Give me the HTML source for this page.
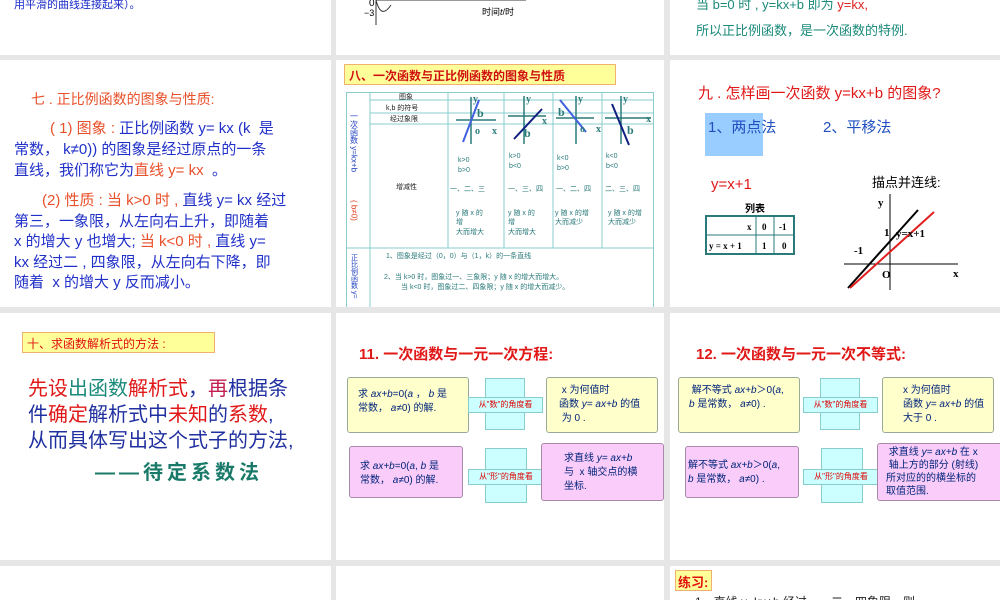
<!DOCTYPE html>
<html><head><meta charset="utf-8"><style>
*{margin:0;padding:0;box-sizing:border-box}
body{width:1000px;height:600px;background:#e6e6e6;position:relative;overflow:hidden;font-family:"Liberation Sans","Noto Sans CJK SC",sans-serif}
.s{position:absolute;background:#fff;overflow:hidden}
.a{position:absolute;white-space:nowrap}
.hb{position:absolute;background:#ffff99;border:1px solid #f0b070}
.yb{position:absolute;background:#ffffcc;border:1px solid #9a9;border-radius:3px;font-size:10px;color:#00237a;line-height:14px;padding:6px 10px;white-space:nowrap}
.pb{position:absolute;background:#f9ccfa;border:1px solid #a8a;border-radius:3px;font-size:10px;color:#00237a;line-height:14px;padding:6px 10px;white-space:nowrap}
.cy{position:absolute;background:#ccffff;border:1px solid #8cc}
.arr{position:absolute;font-size:8px;color:#d00;text-align:center;line-height:14px}
</style></head><body>
<!-- row1 -->
<div class="s" style="left:0;top:0;width:331px;height:55px">
<div class="a" style="left:14px;top:-4px;font-size:11px;color:#1a2ac8">用平滑的曲线连接起来）。</div></div>
<div class="s" style="left:336px;top:0;width:328px;height:55px">
<svg class="a" style="left:0;top:0" width="328" height="55"><line x1="40" y1="0" x2="40" y2="25" stroke="#333"/><path d="M40 0 Q45 20 55 5" stroke="#333" fill="none"/><line x1="40" y1="0" x2="190" y2="0" stroke="#333"/></svg>
<div class="a" style="left:33px;top:-2px;font-size:10px">0</div><div class="a" style="left:28px;top:8px;font-size:9px">−3</div>
<div class="a" style="left:146px;top:5px;font-size:9px">时间<i>t</i>/时</div></div>
<div class="s" style="left:670px;top:0;width:330px;height:55px">
<div class="a" style="left:26px;top:-6px;font-size:13px;color:#1a8a7a">当 b=0 时 , y=kx+b 即为 <span style="color:#e02020">y=kx,</span></div>
<div class="a" style="left:26px;top:20px;font-size:13px;color:#1a8a7a">所以正比例函数，是一次函数的特例.</div></div>
<!-- row2 -->
<div class="s" style="left:0;top:60px;width:331px;height:247px">
<div class="a" style="left:31px;top:29px;font-size:14px;color:#e8502a">七 . 正比例函数的图象与性质:</div>
<div class="a" style="left:14px;top:58px;font-size:15px;color:#2030c8;line-height:21px">
<span style="padding-left:36px"></span><span style="color:#e8502a">( 1) 图象 :</span> 正比例函数 y= kx (k &nbsp;是<br>常数， k≠0)) 的图象是经过原点的一条<br>直线，我们称它为<span style="color:#e8502a">直线 y= kx</span> &nbsp;。</div>
<div class="a" style="left:14px;top:131px;font-size:15px;color:#2030c8;line-height:20.5px">
<span style="padding-left:28px"></span><span style="color:#e8502a">(2) 性质 : 当 k&gt;0 时 ,</span> 直线 y= kx 经过<br>第三，一象限，从左向右上升，即随着<br>x 的增大 y 也增大; <span style="color:#e8502a">当 k&lt;0 时 ,</span> 直线 y=<br>kx 经过二 , 四象限，从左向右下降，即<br>随着 &nbsp;x 的增大 y 反而减小。</div></div>
<div class="s" style="left:336px;top:60px;width:328px;height:247px">
<div class="hb" style="left:8px;top:4px;width:272px;height:21px;font-size:12px;color:#d01010;font-weight:bold;padding:2px 4px">八、一次函数与正比例函数的图象与性质</div>
<svg class="a" style="left:10px;top:32px" width="310" height="215">
<g stroke="#8cc" fill="none"><rect x="0.5" y="0.5" width="307" height="216"/><line x1="24" y1="0" x2="24" y2="216"/><line x1="102" y1="0" x2="102" y2="156"/><line x1="158" y1="0" x2="158" y2="156"/><line x1="207" y1="0" x2="207" y2="156"/><line x1="256" y1="0" x2="256" y2="156"/><line x1="24" y1="8" x2="308" y2="8"/><line x1="24" y1="21" x2="308" y2="21"/><line x1="24" y1="32" x2="308" y2="32"/><line x1="0" y1="156" x2="308" y2="156"/></g>
<g stroke="#2a7a7a" stroke-width="1.5"><line x1="110" y1="28" x2="150" y2="28"/><line x1="125" y1="5" x2="125" y2="52"/><line x1="162" y1="24" x2="200" y2="24"/><line x1="178" y1="4" x2="178" y2="52"/><line x1="210" y1="26" x2="248" y2="26"/><line x1="230" y1="4" x2="230" y2="52"/><line x1="259" y1="26" x2="305" y2="26"/><line x1="275" y1="4" x2="275" y2="52"/></g>
<g stroke-width="2"><line x1="117" y1="50" x2="133" y2="8" stroke="#4060e0"/><line x1="168" y1="47" x2="196" y2="17" stroke="#102080"/><line x1="214" y1="8" x2="240" y2="40" stroke="#4060e0"/><line x1="266" y1="12" x2="283" y2="53" stroke="#102080"/></g>
<g fill="#2a7a7a" font-size="10" font-weight="bold" font-family="Liberation Serif"><text x="127" y="10">y</text><text x="131" y="25" font-size="12">b</text><text x="129" y="42">o</text><text x="146" y="42">x</text><text x="180" y="10">y</text><text x="196" y="32">x</text><text x="178" y="45" font-size="12">b</text><text x="232" y="10">y</text><text x="212" y="24" font-size="12">b</text><text x="234" y="40">o</text><text x="250" y="40">x</text><text x="277" y="10">y</text><text x="300" y="30">x</text><text x="281" y="42" font-size="12">b</text></g>
<g fill="#2a7a7a" font-size="7"><text x="112" y="70">k&gt;0</text><text x="112" y="80">b&gt;0</text><text x="163" y="66">k&gt;0</text><text x="163" y="76">b&lt;0</text><text x="211" y="68">k&lt;0</text><text x="211" y="78">b&gt;0</text><text x="260" y="66">k&lt;0</text><text x="260" y="76">b&lt;0</text>
<text x="104" y="99">一、二、三</text><text x="162" y="99">一、三、四</text><text x="210" y="99">一、二、四</text><text x="259" y="99">二、三、四</text>
<text x="110" y="123">y 随 x 的</text><text x="110" y="132">增</text><text x="110" y="142">大而增大</text><text x="162" y="123">y 随 x 的</text><text x="162" y="132">增</text><text x="162" y="142">大而增大</text><text x="209" y="123">y 随 x 的增</text><text x="209" y="132">大而减少</text><text x="262" y="123">y 随 x 的增</text><text x="262" y="132">大而减少</text>
<text x="40" y="166">1、图象是经过（0，0）与（1，k）的一条直线</text><text x="38" y="187">2、当 k&gt;0 时，图象过一、三象限；y 随 x 的增大而增大。</text><text x="55" y="197">当 k&lt;0 时，图象过二、四象限；y 随 x 的增大而减少。</text></g>
<g fill="#222" font-size="7"><text x="53" y="7">图象</text><text x="40" y="18">k,b 的符号</text><text x="44" y="29">经过象限</text><text x="50" y="97">增减性</text></g>
<text x="8" y="20" font-size="8" fill="#2040c0" writing-mode="tb">一次函数 y=kx+b</text><text x="8" y="108" font-size="8" fill="#e04020" writing-mode="tb">( b≠0)</text><text x="8" y="162" font-size="7" fill="#2040c0" writing-mode="tb">正比例函数 y=</text>
</svg></div>
<div class="s" style="left:670px;top:60px;width:330px;height:247px">
<div class="a" style="left:28px;top:22px;font-size:15px;color:#e01818">九 . 怎样画一次函数 y=kx+b 的图象?</div>
<div class="a" style="left:35px;top:53px;width:58px;height:43px;background:#99ccff"></div>
<div class="a" style="left:38px;top:56px;font-size:15px;color:#2050c0">1、两点法</div>
<div class="a" style="left:153px;top:56px;font-size:15px;color:#2050c0">2、平移法</div>
<div class="a" style="left:41px;top:116px;font-size:15px;color:#e01818">y=x+1</div>
<div class="a" style="left:202px;top:112px;font-size:13px">描点并连线:</div>
<div class="a" style="left:75px;top:140px;font-size:10px;font-weight:bold">列表</div>
<svg class="a" style="left:35px;top:155px" width="92" height="42"><rect x="1" y="1" width="88" height="38" fill="none" stroke="#2a7a7a" stroke-width="2"/><line x1="2" y1="20" x2="89" y2="20" stroke="#2a7a7a"/><line x1="51" y1="1" x2="51" y2="39" stroke="#2a7a7a"/><line x1="69" y1="1" x2="69" y2="39" stroke="#2a7a7a"/><g font-size="9" font-family="Liberation Serif" font-weight="bold"><text x="42" y="15">x</text><text x="57" y="15">0</text><text x="74" y="15">-1</text><text x="4" y="34">y = x + 1</text><text x="57" y="34">1</text><text x="77" y="34">0</text></g></svg>
<svg class="a" style="left:170px;top:130px" width="130" height="100"><line x1="4" y1="74" x2="118" y2="74" stroke="#000"/><line x1="50" y1="4" x2="50" y2="100" stroke="#000"/><line x1="8" y1="98" x2="78" y2="20" stroke="#000" stroke-width="2"/><line x1="10" y1="98" x2="94" y2="22" stroke="#e02020" stroke-width="2"/><g font-size="11" font-weight="bold" font-family="Liberation Serif"><text x="38" y="16">y</text><text x="113" y="87">x</text><text x="44" y="46">1</text><text x="56" y="47">y=x+1</text><text x="14" y="64">-1</text><text x="42" y="88">O</text></g></svg></div>
<!-- row3 -->
<div class="s" style="left:0;top:313px;width:331px;height:247px">
<div class="hb" style="left:22px;top:19px;width:193px;height:21px;font-size:12px;color:#e01010;padding:2px 4px">十、求函数解析式的方法 :</div>
<div class="a" style="left:28px;top:63px;font-size:20px;line-height:26px;color:#2030a0"><span style="color:#e01818">先设</span><span style="color:#1a8a7a">出函数</span><span style="color:#e01818">解析式</span>，<span style="color:#c02050">再</span><span style="color:#2030a0">根据条</span></div>
<div class="a" style="left:28px;top:89px;font-size:20px;line-height:26px;color:#2030a0">件<span style="color:#e01818">确定</span>解析式中<span style="color:#e01818">未知</span>的<span style="color:#e01818">系数</span>,</div>
<div class="a" style="left:28px;top:115px;font-size:20px;line-height:26px;color:#2030a0">从而具体写出这个式子的方法,</div>
<div class="a" style="left:95px;top:143px;font-size:20px;color:#1a7a6a;font-weight:bold;letter-spacing:4px">——待定系数法</div></div>
<div class="s" style="left:336px;top:313px;width:328px;height:247px">
<div class="a" style="left:23px;top:30px;font-size:15px;color:#e01818;font-weight:bold">11. 一次函数与一元一次方程:</div>
<div class="yb" style="left:11px;top:64px;width:122px;height:56px;padding-top:10px">求 <i>ax+b</i>=0(<i>a</i> ， <i>b</i> 是<br>常数， <i>a</i>≠0) 的解.</div>
<div class="cy" style="left:149px;top:65px;width:40px;height:52px"></div><div class="arr" style="left:132px;top:84px;width:75px;background:#ccffff;border:1px solid #8cc">从"数"的角度看</div>
<div class="yb" style="left:210px;top:64px;width:112px;height:56px;padding-left:12px">&nbsp;x 为何值时<br>函数 <i>y= ax+b</i> 的值<br>&nbsp;为 0 .</div>
<div class="pb" style="left:13px;top:133px;width:114px;height:52px;padding-top:13px">求 <i>ax+b</i>=0(<i>a</i>, <i>b</i> 是<br>常数， <i>a</i>≠0) 的解.</div>
<div class="cy" style="left:149px;top:135px;width:42px;height:55px"></div><div class="arr" style="left:132px;top:156px;width:76px;background:#ccffff;border:1px solid #8cc">从"形"的角度看</div>
<div class="pb" style="left:205px;top:130px;width:123px;height:58px;padding-left:22px;padding-top:8px">求直线 <i>y= ax+b</i><br>与 &nbsp;x 轴交点的横<br>坐标.</div></div>
<div class="s" style="left:670px;top:313px;width:330px;height:247px">
<div class="a" style="left:26px;top:30px;font-size:15px;color:#e01818;font-weight:bold">12. 一次函数与一元一次不等式:</div>
<div class="yb" style="left:8px;top:64px;width:122px;height:56px;padding-left:10px;padding-top:6px">&nbsp;解不等式 <i>ax+b</i>＞0(<i>a</i>,<br><i>b</i> 是常数， <i>a</i>≠0) .</div>
<div class="cy" style="left:150px;top:65px;width:40px;height:52px"></div><div class="arr" style="left:133px;top:84px;width:75px;background:#ccffff;border:1px solid #8cc">从"数"的角度看</div>
<div class="yb" style="left:212px;top:64px;width:112px;height:56px;padding-left:20px">x 为何值时<br>函数 <i>y= ax+b</i> 的值<br>大于 0 .</div>
<div class="pb" style="left:15px;top:133px;width:114px;height:52px;padding:12px 2px">解不等式 <i>ax+b</i>＞0(<i>a</i>,<br><i>b</i> 是常数， <i>a</i>≠0) .</div>
<div class="cy" style="left:151px;top:135px;width:42px;height:55px"></div><div class="arr" style="left:133px;top:156px;width:76px;background:#ccffff;border:1px solid #8cc">从"形"的角度看</div>
<div class="pb" style="left:207px;top:130px;width:130px;height:58px;padding:2px 8px;line-height:13px">&nbsp;求直线 <i>y= ax+b</i> 在 x<br>&nbsp;轴上方的部分 (射线)<br>所对应的的横坐标的<br>取值范围.</div></div>
<!-- row4 -->
<div class="s" style="left:0;top:566px;width:331px;height:34px"></div>
<div class="s" style="left:336px;top:566px;width:328px;height:34px"></div>
<div class="s" style="left:670px;top:566px;width:330px;height:34px">
<div class="hb" style="left:5px;top:4px;width:37px;height:21px;font-size:13px;color:#e01010;font-weight:bold;padding:1px 2px">练习:</div>
<div class="a" style="left:25px;top:27px;font-size:12px;color:#222">1、直线 y=kx+b 经过一、二、四象限，则</div></div>
</body></html>
